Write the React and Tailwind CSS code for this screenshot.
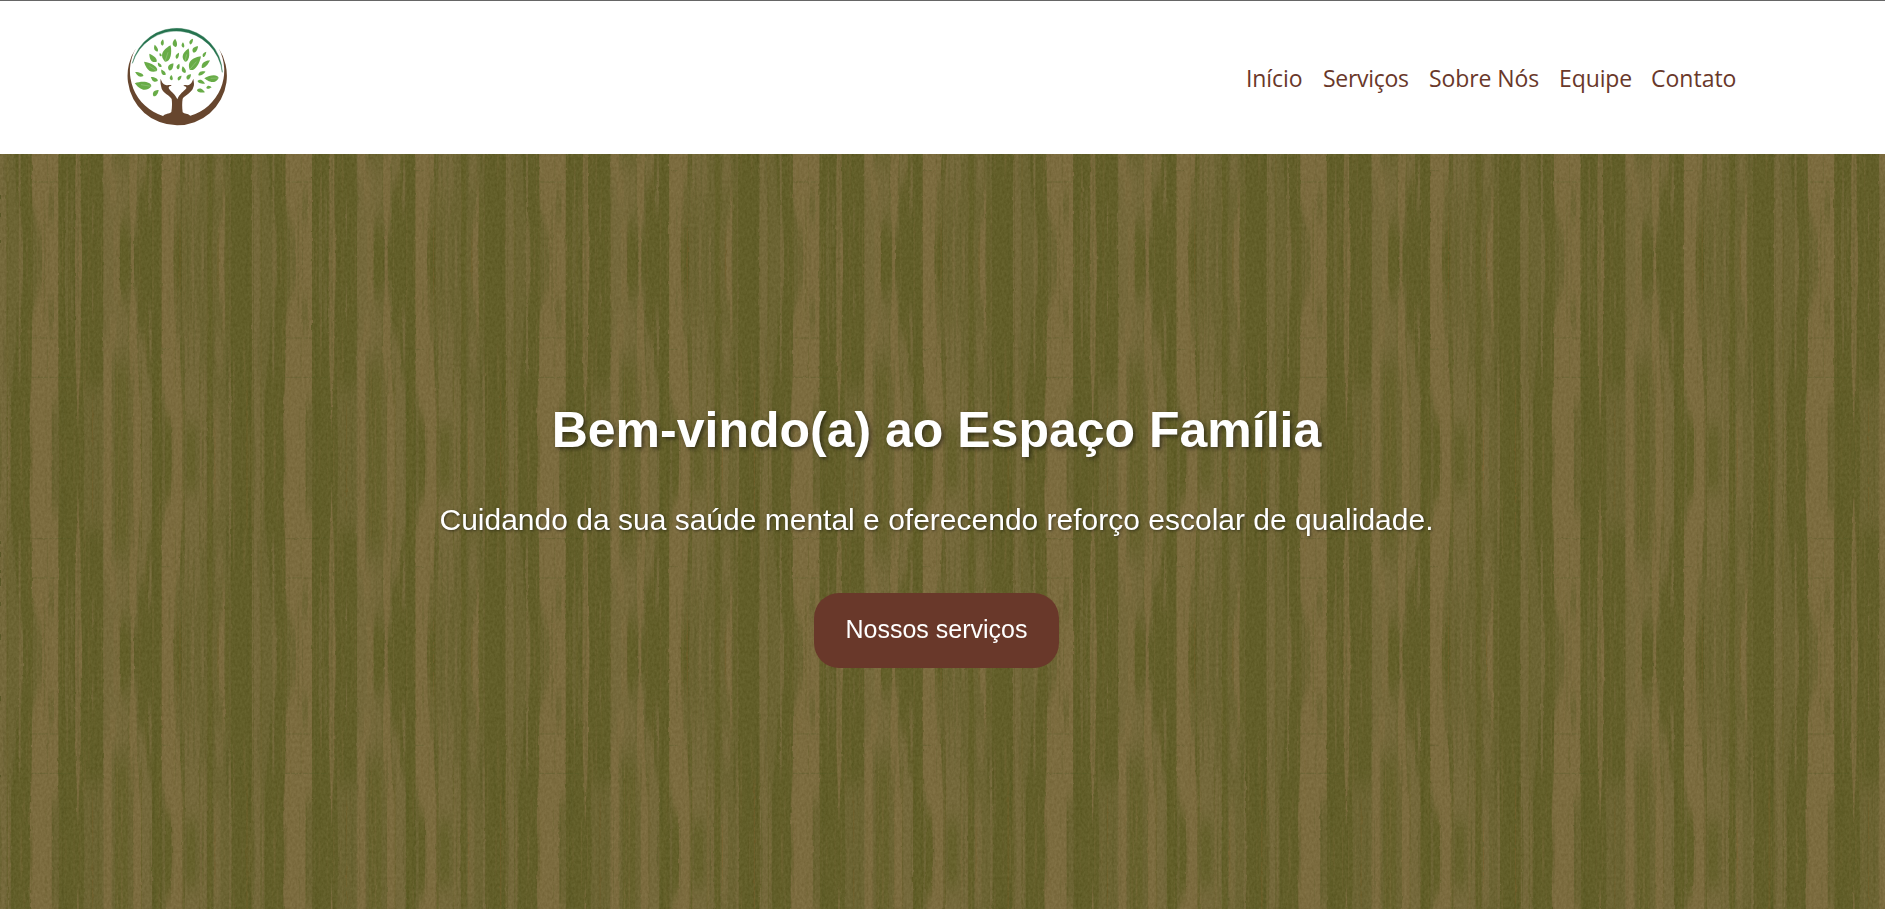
import React from "react";

const NAV = [
  { label: "Início", cls: "w-[57px] tracking-[-0.1px]" },
  { label: "Serviços", cls: "w-[86px] tracking-[-0.3px]" },
  { label: "Sobre Nós", cls: "w-[110px] tracking-[-0.1px]" },
  { label: "Equipe", cls: "w-[72px] tracking-[-0.1px]" },
  { label: "Contato", cls: "w-[85px] tracking-[0px]" },
];

// Each leaf runs from its base to its tip: [x1, y1, x2, y2, width]
const LEAVES = [
  [136, 86, 137, 67, 9],
  [121, 104, 112, 84, 10],
  [144, 134, 158, 84, 26],
  [175, 90, 173, 65, 13],
  [199, 92, 197, 76, 8],
  [219, 82, 227, 65, 9],
  [228, 106, 242, 87, 13],
  [204, 134, 213, 94, 19],
  [118, 135, 96, 111, 15],
  [133, 118, 128, 108, 6],
  [178, 125, 185, 107, 9],
  [218, 158, 250, 116, 25],
  [258, 120, 267, 104, 8],
  [120, 162, 80, 136, 21],
  [133, 150, 122, 137, 8],
  [156, 160, 168, 138, 14],
  [182, 157, 186, 140, 9],
  [254, 152, 278, 129, 13],
  [145, 174, 132, 158, 10],
  [204, 168, 196, 148, 11],
  [79, 177, 54, 166, 11],
  [122, 192, 101, 181, 12],
  [164, 190, 162, 174, 9],
  [183, 190, 193, 176, 9],
  [210, 187, 221, 171, 11],
  [244, 174, 265, 163, 10],
  [103, 208, 53, 201, 24],
  [305, 183, 262, 186, 20],
  [242, 191, 264, 199, 10],
  [109, 237, 124, 218, 13],
  [240, 218, 264, 225, 11],
  [268, 212, 284, 210, 9],
];

function leafPath([x1, y1, x2, y2, w]) {
  const dx = x2 - x1;
  const dy = y2 - y1;
  const len = Math.hypot(dx, dy);
  const nx = (-dy / len) * w;
  const ny = (dx / len) * w;
  const p = (t, n) => `${(x1 + dx * t + nx * n).toFixed(1)} ${(y1 + dy * t + ny * n).toFixed(1)}`;
  return `M${p(0, 0)}C${p(0.05, 0.62)} ${p(0.6, 0.55)} ${p(1, 0.1)}C${p(0.85, -0.2)} ${p(0.35, -1.15)} ${p(0, 0)}Z`;
}

function Logo() {
  return (
    <svg viewBox="0 0 360 360" className="-mt-px size-[120px]" role="img" aria-label="Espaço Família">
      <path d="M46 139A136.9 136.9 0 0 1 316 166A139 141 0 0 0 46 139Z" fill="#26734f" stroke="#26734f" strokeWidth="1.2" />
      <path d="M57 93A149 149 0 1 0 305 94A141 141 0 0 1 220 296C211 289 203 291 197 286C195 270 195 256 197 245C204 235 225 227 229 211C233 201 230 194 229 185C224 198 221 201 215 204C207 206 203 202 199 206C205 208 209 209 208 214C200 224 188 230 181 247C176 233 163 225 156 215C153 208 158 207 164 206C159 202 153 207 146 204C136 200 135 195 131 185C129 198 132 206 134 215C139 228 158 235 164 246C166 260 165 273 163 285C156 292 145 289 138 297A141 141 0 0 1 57 93Z" fill="#67462e" />
      <g fill="#68ac47">
        {LEAVES.map((l, i) => (
          <path key={i} d={leafPath(l)} />
        ))}
      </g>
      <path
        d="M144 134L153 106M218 158L238 134M103 208L72 203M120 162L97 147M204 134L209 112M305 183L281 184"
        fill="none"
        stroke="#fff"
        strokeWidth="1.2"
        opacity="0.5"
      />
    </svg>
  );
}

const LIGHT = "#7c6c3f";
const SOFT = "#75693b";
const MID = "#6c6433";

// Wood stripes of one half tile, in thirds of a pixel (761 x 594)
const STRIPES = [
  [MID, "M0 0H55V150L45 300L33 400V594H0Z"],
  [SOFT, "M0 0H18V270L27 400L30 594H6L0 420Z"],
  [SOFT, "M55 0H69V70L62 130V350H56V130Z"],
  [MID, "M98 0H130V200H96L100 110L98 60Z"],
  [LIGHT, "M127 0H175V594H93L87 480L95 350L96 170L106 130L125 80Z"],
  [MID, "M155 430H176V594H155ZM143 120H162V210H148Z"],
  [MID, "M195 0H205V260H199V170H195ZM212 40H220V200H212Z"],
  [LIGHT, "M225 0H246V60L242 120V280L238 390H230L225 240Z"],
  [LIGHT, "M231 380H237L235 490H232Z"],
  [SOFT, "M276 80H280V166H277Z"],
  [MID, "M250 380H310V594H253Z"],
  [MID, "M310 0H359L362 150L385 60H415V594H310Z"],
  [SOFT, "M310 0H359V90L384 170V260L336 300L337 594H308Z"],
  [LIGHT, "M391 0H402V90L410 130V240L418 400L440 450V594H400V420L388 280V160L394 80Z"],
  [LIGHT, "M312 250H334V594H312ZM340 20H356V110H340ZM330 170H350V250H330Z"],
  [SOFT, "M415 200L440 270V330L456 370V594H425V400L415 320Z"],
  [SOFT, "M444 150H455V300H448V200H444Z"],
  [LIGHT, "M485 0H520V30L530 80L540 130V280L547 430V594H516L513 490L485 430Z"],
  [MID, "M485 400H495V594H488ZM520 90H545V240H530Z"],
  [MID, "M545 0H622V594H548Z"],
  [SOFT, "M553 200H600V330H620V594H600V490H555Z"],
  [SOFT, "M574 0H582V120H590V240H578ZM604 0H611V90H604Z"],
  [MID, "M638 0H692V594H638Z"],
  [LIGHT, "M656 0H672L676 210L668 215V120H658Z"],
  [SOFT, "M642 220H668V330H652ZM685 330H693L695 594H688Z"],
  [SOFT, "M640 440H662V594H644Z"],
  [SOFT, "M755 0H761V594H758Z"],
];
const GAPS = [
  [20, 0, 4, 594], [361, 0, 26, 85], [522, 0, 12, 90], [549, 230, 5, 360],
  [597, 300, 4, 160], [622, 0, 15, 594], [457, 300, 28, 294], [496, 470, 16, 124],
  [560, 500, 26, 94], [676, 0, 12, 210], [423, 300, 3, 294], [345, 330, 38, 264],
];

function rand(n) {
  const v = Math.sin(n * 127.1 + 11.7) * 43758.5453;
  return v - Math.floor(v);
}

const STREAKS = Array.from({ length: 240 }, (_, i) => ({
  x: rand(i) * 758,
  y: rand(i + 300) * 640 - 80,
  h: 30 + rand(i + 600) * 190,
  w: 1.5 + rand(i + 900) * 4,
  fill: i % 5 < 3 ? "#7e6d40" : "#5b5a25",
}));

const COLS = [0, 1, 2, 3, 4, 5, 6, 7];
const ROWS = [-1, 0, 1, 2, 3];

function WoodBackground() {
  return (
    <svg className="absolute inset-0 size-full" aria-hidden="true">
      <defs>
        <g id="wood">
          <rect width="764" height="594" fill="#625e29" />
          {STRIPES.map(([fill, d], i) => (
            <path key={i} d={d} fill={fill} />
          ))}
          {GAPS.map(([x, y, w, h], i) => (
            <rect key={i} x={x} y={y} width={w} height={h} fill="#646029" opacity="0.65" />
          ))}
          {STREAKS.map((s, i) => {
            const top = Math.max(0, s.y);
            const bottom = Math.min(594, s.y + s.h);
            return (
              <rect key={i} x={s.x} y={top} width={s.w} height={Math.max(0, bottom - top)} fill={s.fill} opacity="0.3" />
            );
          })}
          <path d="M540 0V120M654 0V70M741 380V594M278 430V560M645 510V594" stroke="#84602d" strokeWidth="2.5" opacity="0.4" />
        </g>
        <g id="cracks">
          <path d="M97 234H172M96 352H222M485 268H510" stroke="#4f5924" strokeWidth="2.4" strokeDasharray="14 3 30 6" opacity="0.4" />
        </g>
        <filter id="soften" x="0" y="0" width="100%" height="100%" colorInterpolationFilters="sRGB">
          <feGaussianBlur stdDeviation="0.25 9" />
        </filter>
        <filter id="rough" x="0" y="0" width="100%" height="100%" colorInterpolationFilters="sRGB">
          <feTurbulence type="fractalNoise" baseFrequency="0.4 0.1" numOctaves="2" seed="4" result="n" />
          <feDisplacementMap in="SourceGraphic" in2="n" scale="2.4" xChannelSelector="R" yChannelSelector="G" result="d" />
          <feTurbulence type="fractalNoise" baseFrequency="0.42 0.3" numOctaves="2" seed="9" result="g" />
          <feColorMatrix in="g" type="matrix" values="0.6 0 0 0 0.2  0.6 0 0 0 0.2  0.6 0 0 0 0.2  0 0 0 0 1" result="grey" />
          <feComposite in="d" in2="grey" operator="arithmetic" k1="0" k2="1" k3="0.15" k4="-0.075" />
        </filter>
      </defs>
      <rect width="100%" height="100%" fill="#625e29" />
      <g filter="url(#rough)">
        {["wood", "cracks"].map((layer) => (
          <g key={layer} filter={layer === "wood" ? "url(#soften)" : undefined}>
            {ROWS.map((r) =>
              COLS.map((c) => {
                const flipped = r % 2 !== 0;
                const y = 106 + (flipped ? r + 1 : r) * 198;
                return (
                  <use
                    key={`${r}-${c}`}
                    href={`#${layer}`}
                    transform={`translate(${c * 253.7} ${y}) scale(0.333333 ${flipped ? -0.333333 : 0.333333})`}
                  />
                );
              })
            )}
          </g>
        ))}
      </g>
    </svg>
  );
}

export default function App() {
  return (
    <div className="flex h-[909px] w-full flex-col overflow-hidden font-['Liberation_Sans',Arial,sans-serif]">
      <header className="flex h-[154px] shrink-0 items-center justify-between border-t border-[#666] bg-white pr-[149px] pl-[117px]">
        <Logo />
        <nav className="flex gap-5 pt-px font-['Open_Sans','Noto_Sans',sans-serif] text-[23px] leading-8 text-[#69382a]">
          {NAV.map((n) => (
            <a key={n.label} href="#" className={`whitespace-nowrap ${n.cls}`}>
              {n.label}
            </a>
          ))}
        </nav>
      </header>
      <main className="relative flex-1 overflow-hidden">
        <WoodBackground />
        <div className="relative flex flex-col items-center pt-[246px] pr-3 text-white">
          <h1 className="text-[50px] leading-[60px] font-bold [text-shadow:2px_2px_4px_rgba(0,0,0,0.5)]">
            Bem-vindo(a) ao Espaço Família
          </h1>
          <p className="mt-[42px] text-[30px] leading-9 [text-shadow:1px_1px_3px_rgba(0,0,0,0.5)]">
            Cuidando da sua saúde mental e oferecendo reforço escolar de qualidade.
          </p>
          <a
            href="#"
            className="mt-[55px] flex h-[75px] w-[245px] items-center justify-center rounded-[25px] bg-[#69382a] pb-0.5 text-[25px]"
          >
            Nossos serviços
          </a>
        </div>
      </main>
    </div>
  );
}
